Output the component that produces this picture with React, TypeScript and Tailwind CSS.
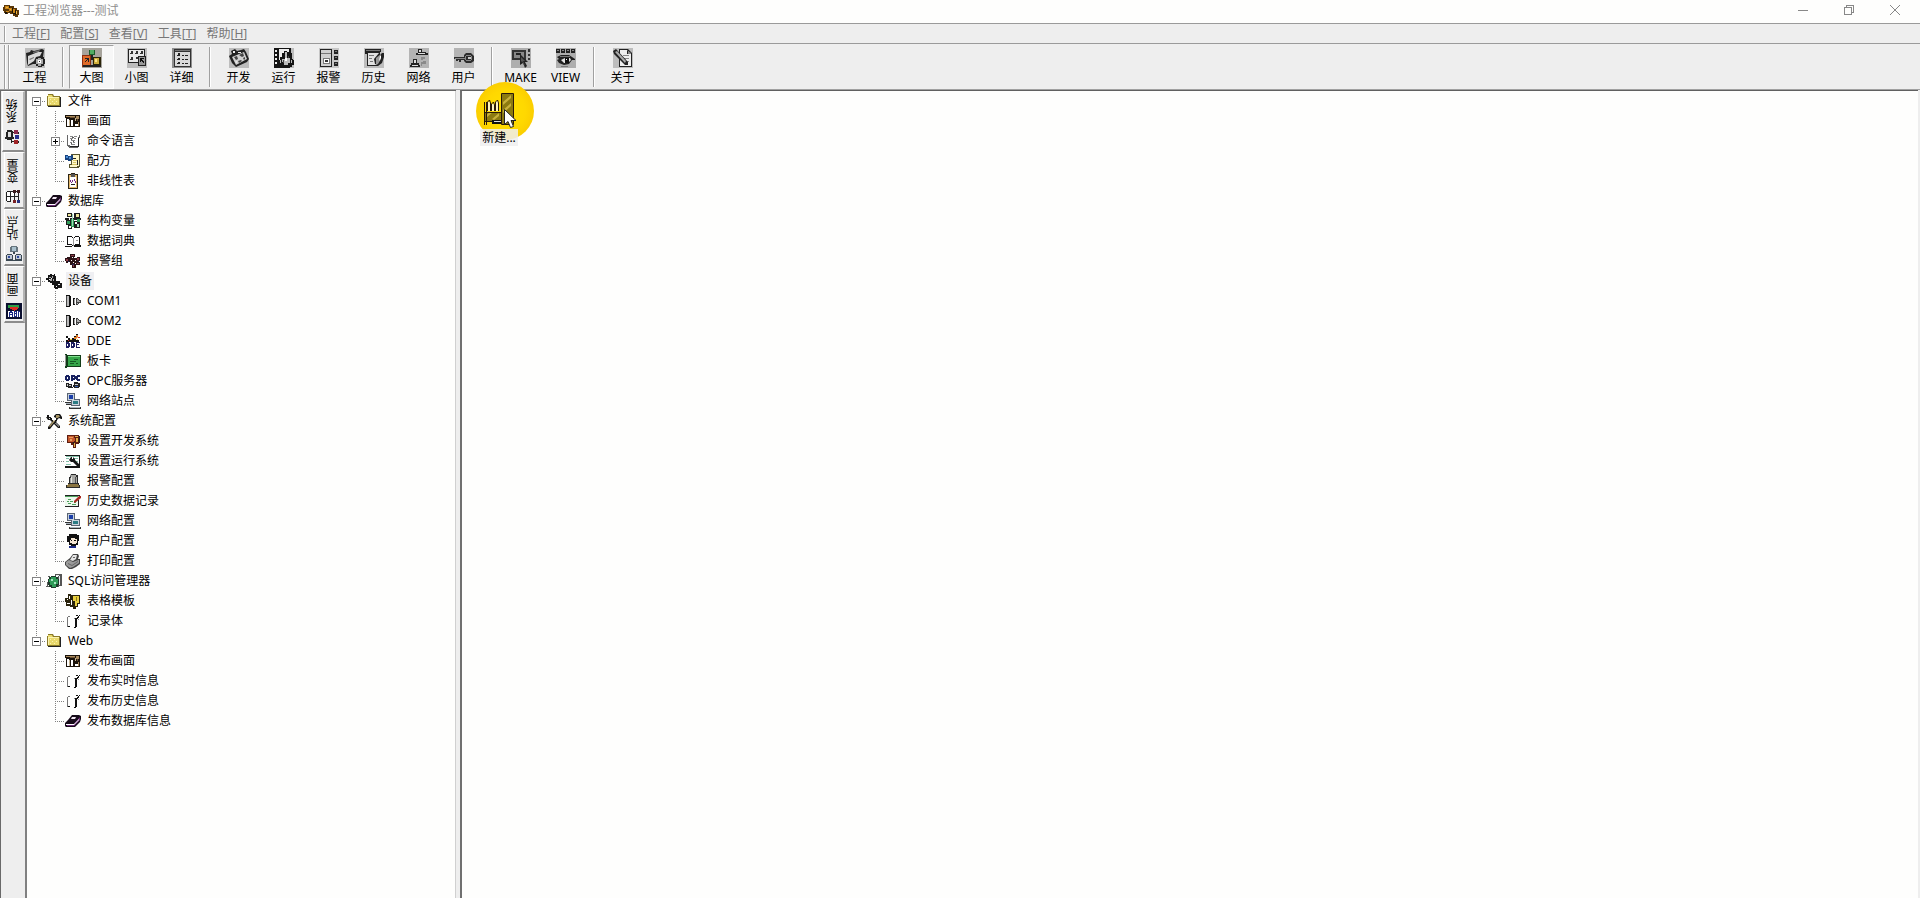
import React, { useState } from 'react';

type Layer = [string, string];

interface TreeEntry {
  label: string;
  icon: string;
  expandable?: boolean;
}

interface TreeGroup {
  label: string;
  icon: string;
  children: TreeEntry[];
}

// 16x16 icons, each layer is [fill, path]
const icons: Record<string, Layer[]> = {
  app: [
    ['#5a3708', 'M1 2h6v1h4v2h3v2h2v5h-1v2h-3v-1h-2v-2H7v-1H5v1H3v-1H1v-2H0V4h1z'],
    ['#c98416', 'M2 3h4v3H2zM6 5h3v3H6zM10 6h2v4h-2zM3 8h3v1H3z'],
    ['#f0b43c', 'M3 4h2v1H3zM7 6h1v1H7zM13 8h1v3h-1z'],
    ['#1c1408', 'M6 3h1v2H6zM9 5h1v5H9zM12 7h1v5h-1zM2 9h2v2H2zM10 10h2v1h-2z'],
  ],
  folder: [
    ['#8a7a28', 'M2 1h5l1 2h6v10H1V3h1z'],
    ['#e9d96c', 'M2 2h4l1 2h6v8H2z'],
    ['#fbf3b0', 'M2 4h11v1H2zM2 5h1v7H2zM4 6h1v1H4zM6 8h1v1H6zM8 6h1v1H8zM10 8h1v1h-1zM4 10h1v1H4zM8 10h1v1H8z'],
    ['#222', 'M14 4h1v10H2v-1h12z'],
  ],
  screen: [
    ['#1a120a', 'M0 2h15v12H1V5H0z'],
    ['#a98a5c', 'M1 3h9v1H1zM11 3h3v3h-3zM13 9h1v4h-1z'],
    ['#fff', 'M2 6h2v7H2zM6 7h2v6H6zM10 11h3v2h-3z'],
    ['#6b5132', 'M5 4h5v1H5zM12 6h1v2h-1z'],
    ['#c4b28e', 'M4 7h1v6H4zM10 5h1v3h-1z'],
  ],
  script: [
    ['#666', 'M2 2h1v10h2v2h7v-1h1V4h1V2h1v3h-1v9h-1v1H4v-1H3v-1H2z'],
    ['#222', 'M5 13h9v1H5zM13 5h1v9h-1z'],
    ['#fff', 'M3 3h10v10H5v-1H3z'],
    ['#888', 'M5 3h3v1H5zM9 3h3v1H9zM5 5h3v1H5zM9 5h2v1H9zM6 7h4v1H6zM5 9h2v1H5zM8 9h2v1H8zM6 11h4v1H6z'],
    ['#555', 'M7 4h2v1H7zM6 6h1v1H6zM8 8h1v1H8zM6 10h1v1H6z'],
  ],
  recipe: [
    ['#57532c', 'M6 1h9v13h-1v1H4v-4h2V7h1z'],
    ['#fdf7ca', 'M7 2h7v11h-2v1H5v-2h2V7H6z'],
    ['#d6c465', 'M8 7h4v1H8zM8 9h3v1H8zM7 11h5v1H7z'],
    ['#16407e', 'M0 2h3v1h3V2h2v5H6v1H3V7H0z'],
    ['#4b8fd4', 'M1 3h2v2H1zM4 4h2v2H4z'],
    ['#222', 'M12 7h1v5h-1zM8 5h3v1H8z'],
  ],
  clipboard: [
    ['#2c2414', 'M3 1h3V0h4v1h3v15H3z'],
    ['#e3b76a', 'M4 2h8v13H4z'],
    ['#fff', 'M5 4h6v10H5z'],
    ['#555', 'M6 1h4v3H6z'],
    ['#7a2a8a', 'M5 7h1v2H5zM6 9h1v1H6zM7 7h1v2H7zM9 6h1v2H9zM10 8h1v2h-1z'],
    ['#222', 'M6 11h4v1H6z'],
  ],
  book: [
    ['#150a18', 'M7 2h7l2 1v3l-1 3-4 4-1 1H1l-1-1v-3l3-3z'],
    ['#6e2d79', 'M15 4v3l-6 6H2v-1h6z'],
    ['#fff', 'M1 11h8l5-5v1l-5 5H1z'],
    ['#1d0f20', 'M8 4h5l-4 4H3z'],
    ['#efe6f0', 'M7 4h4l-1 2H6z'],
  ],
  struct: [
    ['#1d1d1d', 'M2 0h5v4H2zM9 0h6v5H9zM0 5h16v2H0zM1 7h5v5H1zM9 8h6v7H9zM3 12h4v4H3z'],
    ['#eee59a', 'M3 1h3v2H3zM11 1h3v3h-3z'],
    ['#2e9c58', 'M2 8h3v3H2zM6 6h3v8H6zM12 6h3v3h-3z'],
    ['#fff', 'M4 4h1v3H4zM10 9h2v2h-2zM4 13h2v2H4z'],
    ['#9fd8b6', 'M7 1h1v12H7zM12 11h2v3h-2z'],
  ],
  dict: [
    ['#111', 'M2 3h5v1h1v1h1V4h1V3h4v1h1v8h1v2H9v-1H7v1H0v-1h2z'],
    ['#fff', 'M3 4h4v1h1v7H7v-1H3zM9 5h1V4h4v7h-4v1H9zM2 12h5v1H1v-1z'],
    ['#999', 'M8 5h1v8H8zM11 7h2v1h-2z'],
  ],
  alarmGroup: [
    ['#2b1216', 'M5 1h5v3H9v1h3V4h3v4h-1v1h1v3h-4v-2h-1v1h1v4H7v-3H5V9H3v1H1V8H0V5h2V4h3z'],
    ['#8c3d49', 'M6 2h3v1H6zM1 6h2v2H1zM12 5h2v2h-2zM8 12h1v2H8zM12 10h2v1h-2z'],
    ['#f7eef0', 'M6 7h1v1H6zM10 7h1v1h-1zM8 9h1v1H8zM7 4h1v1H7z'],
    ['#2a2860', 'M3 8h1v1H3zM13 8h1v1h-1zM7 11h2v1H7z'],
  ],
  device: [
    ['#161616', 'M2 2h2V1h2v1h2V1h1v2h1v5h4v2h2v5h-4v1h-3v-1H8v-3H6v-2H4V9H2V7H0V5h2z'],
    ['#aaa', 'M3 4h2v1H3zM6 3h1v2H6zM4 6h2v2H4zM7 6h1v2H7z'],
    ['#f3f3f3', 'M5 5h1v1H5zM3 6h1v1H3zM12 11h2v1h-2zM10 13h1v1h-1z'],
  ],
  com: [
    ['#111', 'M1 2h4v1h1v10H5v1H1v-1h3V3H1zM8 5h2v7H8z'],
    ['#bbb', 'M2 3h2v10H2z'],
    ['#444', 'M1 3h1v10H1zM11 5h2v1h1v1h2v3h-2v1h-1v1h-2z'],
    ['#aaa', 'M9 6h1v5H9zM12 6h1v1h1v1h1v1h-3zM12 10h1v1h-1z'],
  ],
  dde: [
    ['#111', 'M1 3h2v2h2v2h2V5h2V3h2V1h2v3h-2v3h3v2H1V7h2V5H1z'],
    ['#e07d22', 'M9 4h2V2h2v2l-2 2H9z'],
    ['#e9c84c', 'M5 6h2v1H5zM12 6h1v1h-1z'],
    ['#1b1c5e', 'M1 9h3v1h1v4H4v1H1zM6 9h3v1h1v4H9v1H6zM11 9h4v1h-3v1h2v1h-2v2h3v1h-4z'],
    ['#fff', 'M2 11h1v2H2zM7 11h1v2H7z'],
    ['#c22', 'M13 4h2v1h-2zM3 7h1v1H3z'],
  ],
  board: [
    ['#123c18', 'M0 1h2v1h14v12H2v1H0z'],
    ['#36a549', 'M3 3h12v10H3z'],
    ['#7fe08c', 'M3 3h12v1H3z'],
    ['#155a22', 'M5 8h6v1H5zM5 10h4v1H5zM9 6h4v1H9zM11 10h2v1h-2z'],
    ['#999', 'M0 2h1v11H0z'],
  ],
  opc: [
    ['#17205f', 'M1 2h3v1h1v4H4v1H1V7H0V3h1zM6 2h4v1h1v3h-1v1H8v1H6zM12 2h3v2h-2v2h2v2h-3V7h-1V3h1z'],
    ['#fff', 'M2 4h1v2H2zM8 4h1v1H8z'],
    ['#222', 'M1 10h3v1h3v3h1v1H3v-1H1zM9 9h4v1h2v4h-1v1H9v-1H8v-2h1z'],
    ['#ccc', 'M2 11h1v2H2zM4 12h2v1H4zM10 11h3v1h-3z'],
    ['#3b61b4', 'M10 13h3v1h-3z'],
  ],
  network: [
    ['#5a6472', 'M2 0h8v8H2zM6 6h9v7H6z'],
    ['#c9d3dd', 'M3 1h6v6H3zM7 7h7v5H7z'],
    ['#1b3ea8', 'M4 2h4v4H4z'],
    ['#2b7c84', 'M8 8h5v3H8z'],
    ['#333', 'M0 9h6v1H0zM1 11h5v1H1zM4 14h12v2H4z'],
    ['#aab4be', 'M1 10h5v1H1zM5 14h10v1H5z'],
  ],
  tools: [
    ['#151515', 'M1 2h2v2h2v1h1v2h1v1h2V7h1V5L8 4V3L10 1h4l2 3v2h-1L13 5l-2 2v1l-1 1 4 4v2h-2l-4-4-4 5H2v-2l4-5-2-2H2L0 4h1z'],
    ['#a59363', 'M10 2h3l1 2h-1l-1 1h-2zM3 13l5-6 1 1-5 6z'],
    ['#ddd', 'M3 5h1v1H3zM9 10h1l3 3v1z'],
  ],
  devSystem: [
    ['#5e1d10', 'M2 2h12v9h-3v4H8v-3H6v-2H2z'],
    ['#c4572c', 'M3 3h6v6H3zM9 5h1v3H9z'],
    ['#eaa05e', 'M4 4h4v1H4zM5 6h2v2H5z'],
    ['#e2b04a', 'M10 3h3v1h-3zM11 5h2v4h-2zM9 10h1v4H9z'],
    ['#222', 'M8 9h1v2H8zM14 3h1v7h-1z'],
  ],
  runSystem: [
    ['#161616', 'M0 2h15v1H0zM0 13h15v2H0zM14 2h1v12h-1z'],
    ['#fff', 'M0 3h14v10H0z'],
    ['#82bfa8', 'M1 3h13v1H1zM1 5h3v1H1zM1 8h3v1H1zM9 5h4v1H9zM1 11h5v1H1zM10 8h3v1h-3z'],
    ['#161616', 'M6 4h1v2h1V4l2 2v1l5 5v2h-2L8 9H6L4 7z'],
  ],
  bell: [
    ['#2a2a2a', 'M6 1h5v1h2v8h1v2h1v3H1v-3h2v-2h1V4h1z'],
    ['#a8a8a4', 'M6 2h5v2h1v6H5V5h1z'],
    ['#e8e8e4', 'M6 4h1v6H6z'],
    ['#8a7440', 'M3 11h10v1h1v2H2v-2h1z'],
    ['#555', 'M10 4h1v6h-1z'],
  ],
  history: [
    ['#222', 'M0 2h15v1H0zM0 13h14v1H0zM13 7h1v7h-1z'],
    ['#eef8ee', 'M0 4h13v9H0z'],
    ['#4ea25c', 'M0 3h13v1H0zM3 6h3v1H3zM2 8h2v1H2zM5 8h3v1H5zM3 10h3v1H3zM7 11h4v1H7zM9 9h2v1H9z'],
    ['#a72a20', 'M14 3h2v2l-5 4-2 1V8z'],
  ],
  user: [
    ['#111', 'M4 1h8v1h2v6h-1v4h-2v1H6v-1H4V9H2V3h2z'],
    ['#f5e6d2', 'M6 5h4v1h2v4h-1v1H7v-1H5V7h1z'],
    ['#111', 'M6 7h1v1H6zM9 7h2v1H9z'],
    ['#1b2a86', 'M4 13h7v2H4z'],
  ],
  printer: [
    ['#444', 'M8 1h5l1 2-1 3h2v5l-4 3-4 2H4L0 12V9l5-4z'],
    ['#e5e5e5', 'M8 2h4l-1 4-3 2-3-1z'],
    ['#9a9a9a', 'M1 9l3-2 4 2 5-2h1v3l-6 4-3 1-4-3z'],
    ['#666', 'M3 10l4 2 6-4v1l-6 4-4-2zM8 4h2v1H8z'],
  ],
  sql: [
    ['#555', 'M9 1h7v12h-3v1h-1V3H9z'],
    ['#e8eef0', 'M10 2h3v1h-3zM13 3h1v9h-1z'],
    ['#1d3a2a', 'M5 3h5v1h2v2h1v6h-1v2h-2v1H5v-1H3v-2H2V6h1V4h2z'],
    ['#2f9c58', 'M5 4h5v2h2v5h-2v3H6v-2H4V9H3V6h2z'],
    ['#a7e4c0', 'M5 6h2v2H5zM8 9h2v2H8z'],
    ['#5a5a5a', 'M0 13h3v1H0zM1 9h1v4H1zM2 3h2v1H2z'],
  ],
  template: [
    ['#2a230c', 'M3 1h3v1h9v9h-2v3h-2v2H8v-2H5v-1H1V9H0V5h3z'],
    ['#e8cf3f', 'M8 3h6v7h-2v3h-2V8H8z'],
    ['#fff', 'M2 6h1v1H2zM4 3h1v3H4zM2 10h3v1H2zM6 7h1v5H6z'],
    ['#8f7a18', 'M11 4h1v4h-1z'],
  ],
  record: [
    ['#777', 'M3 3h2v1H3zM2 4h1v10H2z'],
    ['#111', 'M3 13h2v1H3zM10 5h3v1h-1v8h-1v1H9v-1h1zM13 3h1v2h-1zM11 2h2v1h-2zM14 2h1v1h-1zM12 4h1v1h-1z'],
    ['#888', 'M9 5h1v1H9zM13 6h1v1h-1z'],
  ],
  tabSystem: [
    ['#222', 'M2 1h5v1h1v6h1v2H7v4H6v-3H2v-1H0V8h1V3h1z'],
    ['#ddd', 'M3 3h3v5H3z'],
    ['#8c2c4e', 'M9 1h4v4H9z'],
    ['#28308e', 'M10 6h4v4h-4z'],
    ['#a02428', 'M9 11h4v4H9z'],
    ['#222', 'M8 3h1v1H8zM7 12h2v1H7zM13 3h1v2h-1zM13 12h1v2h-1z'],
  ],
  tabVariable: [
    ['#222', 'M1 2h9v1H1zM0 3h1v9H0zM10 2h1v1h-1zM1 12h3v1H1zM4 3h1v10H4zM8 3h1v10H8zM12 2h1v11h-1zM1 7h11v1H1z'],
    ['#fff', 'M1 3h3v4H1zM1 8h3v4H1zM5 3h3v4H5z'],
    ['#3b1a1c', 'M7 1h3v3H7zM11 1h3v3h-3z'],
    ['#7a2024', 'M7 11h3v3H7z'],
    ['#25307e', 'M11 11h3v3h-3z'],
  ],
  tabStation: [
    ['#66757e', 'M5 0h6v1h1v5H4V1h1z'],
    ['#a9c0cc', 'M6 1h4v4H6z'],
    ['#3b4852', 'M1 8h5v1h1v5H0V9h1zM10 8h5v1h1v5H9V9h1zM7 6h2v2H7zM0 14h16v1H0z'],
    ['#c2cad8', 'M1 9h5v4H1zM10 9h5v4h-5z'],
    ['#304a9a', 'M2 10h2v2H2zM11 10h2v2h-2z'],
  ],
  tabScreen: [
    ['#0c1030', 'M0 0h16v16H0z'],
    ['#fff', 'M2 8h12v6H2z'],
    ['#2ca046', 'M2 2h11v3H2z'],
    ['#d92c22', 'M4 4h8v2h-1v1H9v1H8V7H6V6H4z'],
    ['#1b2a86', 'M4 8h2v1h1v5H6v-2H4v2H3V9h1zM8 8h3v6H8zM12 8h2v1h-1v5h-1z'],
    ['#fff', 'M4 10h2v1H4zM9 9h1v1H9zM9 11h1v2H9z'],
  ],
};

// 20x20 toolbar icons
const toolIcons: Record<string, Layer[]> = {
  project: [
    ['#bdbdbd', 'M0 0h20v20H0z'],
    ['#222', 'M1 5l4-1 1-2 3 1 8-2 2 1-1 7h1v2h1v5h-1v2h-2v1h-4v-1h-2v-2H8l-5 2-1-3z'],
    ['#d8d8d8', 'M3 8l10-4h4l-2 4-4 1-2 4-6 4z'],
    ['#777', 'M8 4l7-2-1 2-6 1zM4 11l5-2v1l-4 2z'],
    ['#aaa', 'M11 11h2v-1h3v1h2v5h-2v2h-3v-2h-2z'],
    ['#fff', 'M13 12h3v3h-3z'],
    ['#333', 'M14 13h1v1h-1z'],
  ],
  large: [
    ['#a7a49c', 'M0 0h20v20H0z'],
    ['#8c3012', 'M0 7h9v12H0z'],
    ['#e06a28', 'M1 8h7v9H1z'],
    ['#2c2508', 'M11 9h8v10h-8z'],
    ['#cfae3a', 'M12 10h5v6h-5z'],
    ['#f8e28c', 'M13 11h2v3h-2z'],
    ['#1d5e2c', 'M7 2h6v5H7z'],
    ['#51ad62', 'M8 2h4v4H8z'],
    ['#222', 'M9 7h2v5H9zM3 10h4v4H6v-2H5v1H4v1H3v-1h1v-1h1v-1H3zM1 17h18v2H1z'],
  ],
  small: [
    ['#bdbdbd', 'M0 0h20v20H0z'],
    ['#222', 'M1 1h17v14H1z'],
    ['#e9e9e9', 'M2 2h15v12H2z'],
    ['#333', 'M4 3h2v2H4zM9 3h2v2H9zM14 3h2v2h-2zM3 5h3v1H3zM8 5h3v1H8zM13 5h3v1h-3zM4 9h2v2H4zM9 9h2v2H9zM3 11h3v1H3z'],
    ['#222', 'M11 8h8v10h-8z'],
    ['#999', 'M12 9h6v8h-6z'],
    ['#111', 'M13 10h4v1h-2v1h1v1h1v2h-1v-1h-1v-1h-1v1h-1z'],
  ],
  detail: [
    ['#8f8f8f', 'M0 0h20v20H0z'],
    ['#333', 'M2 1h17v18H2z'],
    ['#d9d9d9', 'M3 4h15v14H3z'],
    ['#777', 'M3 2h15v1H3z'],
    ['#222', 'M6 5h2v2H6zM5 7h3v1H5zM6 10h2v1H6zM5 11h3v1H5zM6 14h2v1H6zM5 15h3v1H5zM10 7h2v1h-2zM13 7h3v1h-3zM10 11h2v1h-2zM13 11h3v1h-3zM10 15h2v1h-2zM13 15h3v1h-3z'],
  ],
  develop: [
    ['#bdbdbd', 'M0 0h20v20H0z'],
    ['#222', 'M2 3l4-2 2 2 4-1 3-1 2 3 3 7-2 3-11 5-4-4-3-7 3-2z'],
    ['#d0d0d0', 'M3 9l12-5 3 7-11 6z'],
    ['#444', 'M5 9l3-1 1 3-2 1zM10 7l4-2 1 3-2 1zM9 13l3-1 1 1-3 2zM14 10l2-1v2l-1 1z'],
    ['#eee', 'M4 3h2v2H4zM9 4h3v1H9zM6 14l2-1v2z'],
  ],
  run: [
    ['#bdbdbd', 'M0 0h20v20H0z'],
    ['#141414', 'M0 0h17v5h1v6h1v1h1v5h-2v2h-2v1H0z'],
    ['#eee', 'M1 2h2v2H1zM1 6h2v2H1zM1 10h2v2H1zM1 14h2v2H1zM5 1h10v3h-2V3h-3v2H8v4H6v3H5z'],
    ['#bbb', 'M11 4h2v6h3v5h-2v2h-4v-3H8v-3h3zM6 12h1v3H6zM17 12h1v3h-1z'],
    ['#fff', 'M11 10h2v3h-2z'],
    ['#444', 'M9 12h1v3H9zM14 8h1v2h-1z'],
  ],
  alarm: [
    ['#c6c6c6', 'M0 0h20v20H0z'],
    ['#222', 'M1 1h12v18H1zM15 2h4v4h-4zM15 8h4v4h-4zM15 14h4v4h-4z'],
    ['#d0d0d0', 'M2 2h10v16H2z'],
    ['#777', 'M2 5h10v1H2zM4 10h7v6H4zM16 3h2v1h-2zM16 9h2v1h-2zM16 15h2v1h-2z'],
    ['#fff', 'M5 11h5v4H5z'],
    ['#333', 'M6 12h3v2H6z'],
  ],
  history: [
    ['#bdbdbd', 'M0 0h20v20H0z'],
    ['#222', 'M1 1h16v3h-1v3l2-2h2v4l-2 6-4 3H3V6H1z'],
    ['#e2e2e2', 'M4 5h11l-5 6 1 5 3 1H4z'],
    ['#777', 'M2 2h14v1H2zM5 7h5v1H5zM5 10h3v1H5zM6 13h3v1H6z'],
    ['#999', 'M12 10l5-4v5l-3 5h-2z'],
    ['#fff', 'M16 8h1v2l-2 3z'],
  ],
  net: [
    ['#b4b4b4', 'M0 0h20v20H0z'],
    ['#222', 'M9 1h4v3h4v1h2v2H7V5h2zM4 11h4v4h2v2h1v2H1v-2h1v-2h2z'],
    ['#ddd', 'M10 2h2v2h-2zM9 5h7v1H9zM5 12h2v3H5zM3 17h6v1H3z'],
    ['#8a8a8a', 'M12 9h4v2h-2v2h3v3h-4v2h-1v-4h2v-2h-2z'],
  ],
  key: [
    ['#b4b4b4', 'M0 0h20v20H0z'],
    ['#2c2c2c', 'M0 9h10V7l2-2h5l3 3v5l-3 2h-5l-2-2v-1H7v2H5v-2H4v1H2v-2H0z'],
    ['#888', 'M1 10h10v1H1zM12 7h5v1h-5zM12 12h5v1h-5zM17 8h1v4h-1zM11 8h1v4h-1z'],
    ['#ccc', 'M14 9h3v2h-3z'],
  ],
  make: [
    ['#aeaeae', 'M0 0h20v20H0z'],
    ['#333', 'M1 2h14v10H1zM17 1h2v3h-2zM17 6h2v2h-2zM17 10h2v2h-2z'],
    ['#888', 'M3 4h10v6H3z'],
    ['#222', 'M5 5h5v2H5zM9 6l8 8h-3l2 4-2 2-2-5-3 2z'],
    ['#555', 'M10 9l4 4h-2l2 5-1-1-2-4-1 1z'],
  ],
  view: [
    ['#aeaeae', 'M0 0h20v20H0z'],
    ['#222', 'M0 1h4v4H0zM5 1h4v4H5zM10 1h4v4h-4zM15 1h4v4h-4zM1 9l4-2h8l6 4v1h-3l-3 4-5 1-5-2-2-3 2-1z'],
    ['#888', 'M1 2h2v1H1zM6 2h2v1H6zM11 2h2v1h-2zM16 2h2v1h-2z'],
    ['#e4e4e4', 'M5 12l4-2h5l1 2-3 3H8z'],
    ['#111', 'M9 10h4v5H9z'],
    ['#fff', 'M10 11h1v1h-1z'],
    ['#777', 'M4 8h10v1H4zM5 18h7v1H5z'],
  ],
  about: [
    ['#bdbdbd', 'M0 0h20v20H0z'],
    ['#222', 'M6 1h9l4 4v14H6z'],
    ['#eee', 'M7 2h7v4h4v12H7z'],
    ['#888', 'M10 7h6v1h-6zM11 10h5v1h-5zM12 13h4v1h-4zM14 2h1v4h3v-1z'],
    ['#222', 'M0 3l3-2 12 13v3h-3L1 6z'],
    ['#aaa', 'M2 4l2-1 9 10-1 2z'],
  ],
};

const treeData: TreeGroup[] = [
  {
    label: '文件',
    icon: 'folder',
    children: [
      { label: '画面', icon: 'screen' },
      { label: '命令语言', icon: 'script', expandable: true },
      { label: '配方', icon: 'recipe' },
      { label: '非线性表', icon: 'clipboard' },
    ],
  },
  {
    label: '数据库',
    icon: 'book',
    children: [
      { label: '结构变量', icon: 'struct' },
      { label: '数据词典', icon: 'dict' },
      { label: '报警组', icon: 'alarmGroup' },
    ],
  },
  {
    label: '设备',
    icon: 'device',
    children: [
      { label: 'COM1', icon: 'com' },
      { label: 'COM2', icon: 'com' },
      { label: 'DDE', icon: 'dde' },
      { label: '板卡', icon: 'board' },
      { label: 'OPC服务器', icon: 'opc' },
      { label: '网络站点', icon: 'network' },
    ],
  },
  {
    label: '系统配置',
    icon: 'tools',
    children: [
      { label: '设置开发系统', icon: 'devSystem' },
      { label: '设置运行系统', icon: 'runSystem' },
      { label: '报警配置', icon: 'bell' },
      { label: '历史数据记录', icon: 'history' },
      { label: '网络配置', icon: 'network' },
      { label: '用户配置', icon: 'user' },
      { label: '打印配置', icon: 'printer' },
    ],
  },
  {
    label: 'SQL访问管理器',
    icon: 'sql',
    children: [
      { label: '表格模板', icon: 'template' },
      { label: '记录体', icon: 'record' },
    ],
  },
  {
    label: 'Web',
    icon: 'folder',
    children: [
      { label: '发布画面', icon: 'screen' },
      { label: '发布实时信息', icon: 'record' },
      { label: '发布历史信息', icon: 'record' },
      { label: '发布数据库信息', icon: 'book' },
    ],
  },
];

const menus = [
  { label: '工程', hotkey: 'F' },
  { label: '配置', hotkey: 'S' },
  { label: '查看', hotkey: 'V' },
  { label: '工具', hotkey: 'T' },
  { label: '帮助', hotkey: 'H' },
];

const toolGroups = [
  [{ label: '工程', icon: 'project' }],
  [
    { label: '大图', icon: 'large' },
    { label: '小图', icon: 'small' },
    { label: '详细', icon: 'detail' },
  ],
  [
    { label: '开发', icon: 'develop' },
    { label: '运行', icon: 'run' },
    { label: '报警', icon: 'alarm' },
    { label: '历史', icon: 'history' },
    { label: '网络', icon: 'net' },
    { label: '用户', icon: 'key' },
  ],
  [
    { label: 'MAKE', icon: 'make' },
    { label: 'VIEW', icon: 'view' },
  ],
  [{ label: '关于', icon: 'about' }],
];

const sideTabs = [
  { label: '系统', icon: 'tabSystem' },
  { label: '变量', icon: 'tabVariable' },
  { label: '站点', icon: 'tabStation' },
  { label: '画面', icon: 'tabScreen' },
];

const Icon: React.FC<{ layers: Layer[]; size?: number }> = ({ layers, size = 16 }) => (
  <svg width={size} height={size} viewBox={`0 0 ${size} ${size}`} className="shrink-0" aria-hidden="true">
    {layers.map(([fill, d], index) => (
      <path key={index} fill={fill} d={d} />
    ))}
  </svg>
);

interface GuideProps {
  up?: boolean;
  down?: boolean;
  right?: boolean;
  box?: 'plus' | 'minus';
}

// One 19x20 cell of dotted tree lines, optionally with the expander box
const Guide: React.FC<GuideProps> = ({ up, down, right, box }) => (
  <svg width="19" height="20" className="shrink-0" shapeRendering="crispEdges" aria-hidden="true">
    <g stroke="#808080" strokeDasharray="1 1">
      {up && <path d="M9.5 0V10" />}
      {down && <path d="M9.5 10V20" />}
      {right && <path d="M9 10.5H19" />}
    </g>
    {box && (
      <>
        <rect x="5.5" y="6.5" width="8" height="8" fill="#fff" stroke="#848484" />
        <path d="M7 10.5h5" stroke="#000" />
        {box === 'plus' && <path d="M9.5 8v5" stroke="#000" />}
      </>
    )}
  </svg>
);

const TitleBar = () => (
  <header className="flex h-[23px] items-start justify-between bg-[#fefefd]">
    <div className="flex items-center gap-1 pl-[3px] pt-[2px]">
      <Icon layers={icons.app} />
      <h1 className="text-xs leading-[18px] text-[#8f8f8f]">工程浏览器---测试</h1>
    </div>
    <div className="flex pr-[2px]">
      <button aria-label="最小化" className="flex h-5 w-[46px] items-center justify-center">
        <svg width="10" height="10" stroke="#888" shapeRendering="crispEdges">
          <path d="M0 5.5h10" />
        </svg>
      </button>
      <button aria-label="还原" className="flex h-5 w-[46px] items-center justify-center">
        <svg width="10" height="10" stroke="#888" fill="none" shapeRendering="crispEdges">
          <path d="M.5 2.5h7v7h-7zM2.5 2V.5h7v7H8" />
        </svg>
      </button>
      <button aria-label="关闭" className="flex h-5 w-[46px] items-center justify-center">
        <svg width="10" height="10" stroke="#888">
          <path d="M0 0l10 10M10 0L0 10" />
        </svg>
      </button>
    </div>
  </header>
);

const MenuBar = () => (
  <nav className="flex h-5 items-center border-t border-[#9a9a9a] bg-[#eeeeee] pl-1">
    <span className="h-4 w-[2px] border-l border-[#a0a0a0] bg-white" />
    <ul className="flex gap-[10px] pl-[6px]">
      {menus.map((menu) => (
        <li key={menu.label}>
          <button className="block text-xs leading-4 text-[#777]">
            {menu.label}[<span className="underline">{menu.hotkey}</span>]
          </button>
        </li>
      ))}
    </ul>
  </nav>
);

const Toolbar = () => {
  const [view, setView] = useState('大图');

  return (
    <div role="toolbar" className="flex h-[46px] items-stretch border-t border-[#9a9a9a] bg-[#eeeeee] pl-1 pt-px">
      <div className="flex gap-[2px] pr-[2px]">
        <span className="w-[2px] border-l border-[#a0a0a0] bg-white" />
        <span className="w-[2px] border-l border-[#a0a0a0] bg-white" />
      </div>
      {toolGroups.map((group, index) => (
        <div key={index} className="flex">
          {index > 0 && (
            <div className="flex w-3 justify-center py-[2px]">
              <span className="w-[2px] border-l border-[#a0a0a0] bg-white" />
            </div>
          )}
          {group.map((tool) => (
            <button
              key={tool.label}
              onClick={() => index === 1 && setView(tool.label)}
              className={`flex w-[45px] flex-col items-center border pt-[2px] ${
                tool.label === view
                  ? 'border-t-[#a0a0a0] border-r-white border-b-white border-l-[#a0a0a0] bg-[#f7f7f7]'
                  : 'border-transparent'
              }`}
            >
              <Icon layers={toolIcons[tool.icon]} size={20} />
              <span className="text-xs leading-5 text-black">{tool.label}</span>
            </button>
          ))}
        </div>
      ))}
    </div>
  );
};

const SideTabs = () => (
  <div role="tablist" aria-orientation="vertical" className="flex w-6 shrink-0 flex-col bg-[#eeeeee] pl-px">
    {sideTabs.map((tab, index) => (
      <button
        key={tab.label}
        role="tab"
        aria-selected={index === 0}
        className={`flex flex-col items-center gap-[6px] border-t border-r-2 border-b-2 border-l border-t-white border-r-[#b4b4b4] border-b-[#8c8c8c] border-l-white ${
          index === 0 ? 'h-[61px] pt-[7px]' : 'ml-[2px] h-[57px] pt-[6px]'
        }`}
      >
        <span className="rotate-180 text-xs leading-4 text-black [writing-mode:vertical-rl]">{tab.label}</span>
        <Icon layers={icons[tab.icon]} />
      </button>
    ))}
  </div>
);

const ProjectTree = () => {
  const [closed, setClosed] = useState<string[]>([]);

  const toggle = (label: string) => {
    setClosed(closed.includes(label) ? closed.filter((item) => item !== label) : [...closed, label]);
  };

  return (
    <ul role="tree" className="text-xs text-black">
      {treeData.map((group, groupIndex) => {
        const lastGroup = groupIndex === treeData.length - 1;
        const open = !closed.includes(group.label);
        return (
          <li key={group.label} role="treeitem" aria-expanded={open}>
            <div className="flex h-5 items-center">
              <button aria-label={group.label} onClick={() => toggle(group.label)}>
                <Guide up={groupIndex > 0} down={!lastGroup} right box={open ? 'minus' : 'plus'} />
              </button>
              <Icon layers={icons[group.icon]} />
              <button className={`ml-1 px-[2px] leading-[18px] ${group.label === '设备' ? 'bg-[#efeff2]' : ''}`}>
                {group.label}
              </button>
            </div>
            {open && (
              <ul role="group">
                {group.children.map((entry, index) => (
                  <li key={entry.label} role="treeitem" className="flex h-5 items-center">
                    <Guide up={!lastGroup} down={!lastGroup} />
                    <Guide
                      up
                      down={index < group.children.length - 1}
                      right
                      box={entry.expandable ? 'plus' : undefined}
                    />
                    <Icon layers={icons[entry.icon]} />
                    <button className="ml-1 px-[2px] leading-[18px]">{entry.label}</button>
                  </li>
                ))}
              </ul>
            )}
          </li>
        );
      })}
    </ul>
  );
};

// "New" item with the cursor spotlight behind it
const NewItem = () => (
  <button className="relative flex w-[74px] flex-col items-center pt-[2px]">
    <span className="absolute -top-[9px] left-[14px] size-[58px] rounded-full bg-[radial-gradient(circle,#ffe100_0%,#ffd800_50%,#f5bf00_100%)]" />
    <svg width="32" height="32" viewBox="0 0 32 32" className="relative" aria-hidden="true">
      <path fill="#8c7a10" d="M18 1h12v30H18zM2 19h16v9H2z" />
      <path fill="#c9b13c" d="M20 9l8-7v3l-8 7zM20 17l8-7v3l-8 7zM3 22l4-3h3l-7 6zM9 26l7-6v3l-5 4z" />
      <path fill="none" stroke="#2a1a08" d="M18.500.5h12v31h-12zM1.500 9v23M3.500 9v23M1 19.500h17M1 28.500h17" />
      <path fill="#fff4c0" d="M5 9h2v9H5zM9 11h2v7H9zM13 8h2v10h-2z" />
      <path fill="none" stroke="#2a1a08" d="M4.500 18V9l2-2 1 3v8M8.500 18v-7l2-2 1 3v6M12.500 18V9l2-2 1 3v8" />
      <path fill="#111" d="M9 27h9v4H9z" />
      <path fill="#ddd" d="M11 28h7v1h-7z" />
    </svg>
    <svg width="14" height="20" viewBox="0 0 14 20" className="absolute left-[42px] top-[18px]" aria-hidden="true">
      <path fill="#fff" stroke="#222" d="M.5.500v15l3.500-3 2.500 6 3-1-2.500-6h5z" />
    </svg>
    <span className="relative mt-1 bg-[#efefef]/85 px-[2px] text-xs leading-[17px] text-black">新建...</span>
  </button>
);

export default function App() {
  return (
    <div className="flex h-screen flex-col overflow-hidden bg-[#eeeeee] font-['Noto_Sans','Noto_Sans_CJK_SC',sans-serif]">
      <TitleBar />
      <MenuBar />
      <Toolbar />
      <div className="flex min-h-0 flex-1 border-t border-[#a0a0a0]">
        <div className="flex w-[456px] shrink-0 border-t border-l border-[#696969]">
          <SideTabs />
          <div className="flex-1 overflow-hidden border-r border-l-2 border-r-[#d0d0d0] border-l-[#808080] bg-[#fefefd]">
            <ProjectTree />
          </div>
        </div>
        <main className="ml-1 mr-[2px] flex-1 border-t border-l-2 border-t-[#606060] border-l-[#707070] bg-[#fefefd]">
          <NewItem />
        </main>
      </div>
    </div>
  );
}
